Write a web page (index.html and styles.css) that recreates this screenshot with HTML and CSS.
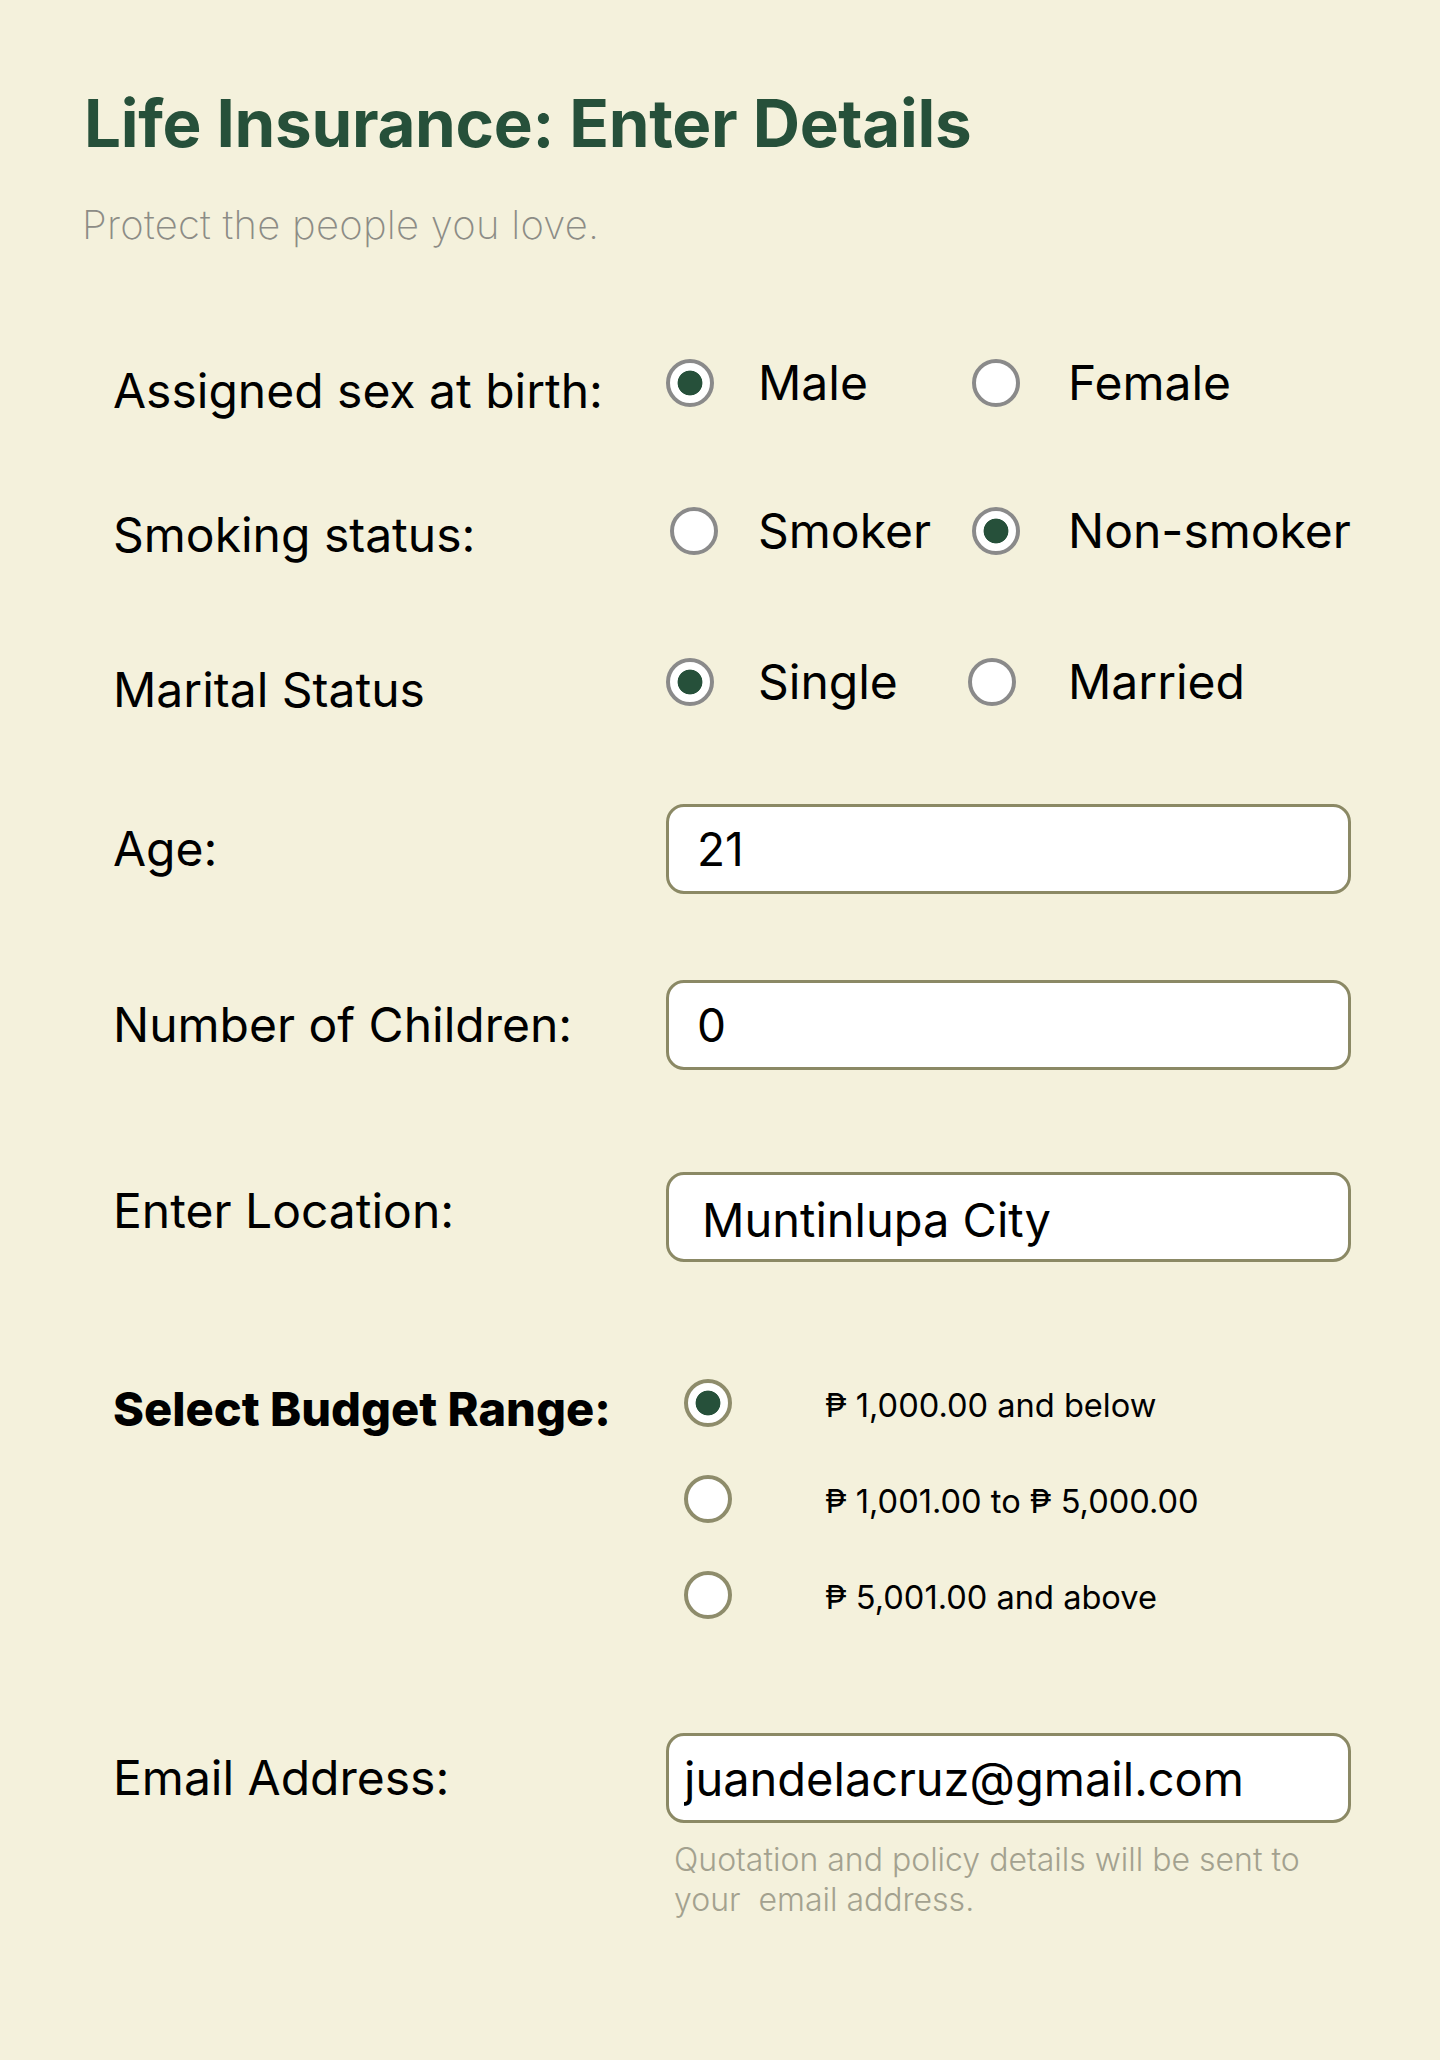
FILE: index.html
```html
<!DOCTYPE html>
<html lang="en">
<head>
<meta charset="utf-8">
<title>Life Insurance: Enter Details</title>
<link rel="stylesheet" href="styles.css">
</head>
<body>
<main class="page">
  <h1 class="title">Life Insurance: Enter Details</h1>
  <p class="subtitle">Protect the people you love.</p>

  <form class="form">
    <div class="row row--choice row--sex">
      <span class="label label--down">Assigned sex at birth:</span>
      <div class="choices">
        <input type="radio" class="radio" name="sex" checked>
        <span class="choice-text">Male</span>
        <input type="radio" class="radio" name="sex">
        <span class="choice-text">Female</span>
      </div>
    </div>

    <div class="row row--choice row--smoke">
      <span class="label label--slight">Smoking status:</span>
      <div class="choices">
        <input type="radio" class="radio radio--shift" name="smoke">
        <span class="choice-text">Smoker</span>
        <input type="radio" class="radio" name="smoke" checked>
        <span class="choice-text">Non-smoker</span>
      </div>
    </div>

    <div class="row row--choice row--marital">
      <span class="label label--down">Marital Status</span>
      <div class="choices">
        <input type="radio" class="radio" name="marital" checked>
        <span class="choice-text">Single</span>
        <input type="radio" class="radio radio--back" name="marital">
        <span class="choice-text">Married</span>
      </div>
    </div>

    <div class="row row--field row--age">
      <span class="label">Age:</span>
      <input type="text" class="field field--num" value="21">
    </div>

    <div class="row row--field row--kids">
      <span class="label">Number of Children:</span>
      <input type="text" class="field field--num" value="0">
    </div>

    <div class="row row--field row--loc">
      <span class="label label--up">Enter Location:</span>
      <input type="text" class="field field--loc" value="Muntinlupa City">
    </div>

    <div class="row row--budget">
      <span class="label label--bold">Select Budget Range:</span>
      <div class="budget">
        <label class="budget-option">
          <input type="radio" class="radio radio--olive" name="budget" checked>
          <span class="budget-text">₱ 1,000.00 and below</span>
        </label>
        <label class="budget-option">
          <input type="radio" class="radio radio--olive" name="budget">
          <span class="budget-text">₱ 1,001.00 to ₱ 5,000.00</span>
        </label>
        <label class="budget-option">
          <input type="radio" class="radio radio--olive" name="budget">
          <span class="budget-text">₱ 5,001.00 and above</span>
        </label>
      </div>
    </div>

    <div class="row row--email">
      <span class="label">Email Address:</span>
      <input type="text" class="field field--email" value="juandelacruz@gmail.com">
      <p class="hint">Quotation and policy details will be sent to your&nbsp; email address.</p>
    </div>
  </form>
</main>
</body>
</html>
```

FILE: styles.css
```css
html, body {
  margin: 0;
  padding: 0;
}

body {
  background: #f4f1dc;
  font-family: Inter, "Noto Sans", "DejaVu Sans", sans-serif;
  color: #000;
  min-height: 2060px;
}

.page {
  padding: 84px 0 0 84px;
}

.title {
  margin: 0;
  font-size: 65.5px;
  line-height: 80px;
  font-weight: 700;
  color: #26503a;
  letter-spacing: -0.3px;
}

.subtitle {
  margin: 37px 0 0 -2px;
  font-size: 40px;
  line-height: 48px;
  font-weight: 200;
  color: #8c8c86;
  letter-spacing: 0.25px;
}

.form {
  display: flex;
  flex-direction: column;
  padding-left: 29px;
}

.row {
  display: grid;
  grid-template-columns: 553px 685px;
  align-items: center;
}

.label {
  font-size: 48px;
  line-height: 58px;
}

/* nudge a label off the centre line of its row */
.label--down {
  padding-top: 8px;
  margin-bottom: -8px;
}

.label--slight {
  padding-top: 4px;
  margin-bottom: -4px;
}

.label--up {
  padding-bottom: 6px;
  margin-top: -6px;
}

.label--bold {
  font-weight: 800;
  font-size: 47px;
  line-height: 56px;
  align-self: start;
  padding-top: 2px;
}

.row--sex { margin-top: 105px; }
.row--smoke { margin-top: 90px; }
.row--marital { margin-top: 93px; }
.row--age { margin-top: 93px; }
.row--kids { margin-top: 86px; }
.row--loc { margin-top: 102px; }
.row--budget { margin-top: 117px; align-items: start; }
.row--email { margin-top: 114px; }

.choices {
  display: grid;
  grid-template-columns: 92px 214px 96px auto;
  align-items: center;
  height: 58px;
}

.choice-text {
  font-size: 48px;
  line-height: 58px;
  white-space: nowrap;
}

.radio {
  appearance: none;
  -webkit-appearance: none;
  margin: 0;
  width: 48px;
  height: 48px;
  box-sizing: border-box;
  border-radius: 50%;
  border: 4px solid #8a8a8a;
  background: #fff;
}

.radio:checked {
  background: radial-gradient(circle, #26503a 0 12px, #fff 12.8px);
}

.radio--shift {
  margin-left: 4px;
}

.radio--back {
  margin-left: -4px;
}

.radio--olive {
  border-color: #8e8c6b;
}

.field {
  box-sizing: border-box;
  width: 685px;
  height: 90px;
  margin: 0;
  border: 3px solid #8b8965;
  border-radius: 18px;
  background: #fff;
  font-family: Inter, "Noto Sans", "DejaVu Sans", sans-serif;
  font-size: 46px;
  color: #000;
  padding: 0 0 0 28px;
  outline: none;
}

.field--loc {
  padding-left: 33px;
  padding-top: 4px;
  font-size: 47px;
}

.field--email {
  padding-left: 15px;
  font-size: 47px;
}

.budget {
  display: flex;
  flex-direction: column;
  gap: 48px;
  padding-left: 18px;
}

.budget-option {
  display: flex;
  align-items: center;
  gap: 93px;
  height: 48px;
}

.budget-text {
  font-size: 32.6px;
  line-height: 40px;
  padding-top: 4px;
  white-space: nowrap;
}

.hint {
  grid-column: 2;
  margin: 17px 0 0;
  padding-left: 8px;
  font-size: 32px;
  line-height: 40px;
  font-weight: 300;
  color: #a3a18f;
}
```
